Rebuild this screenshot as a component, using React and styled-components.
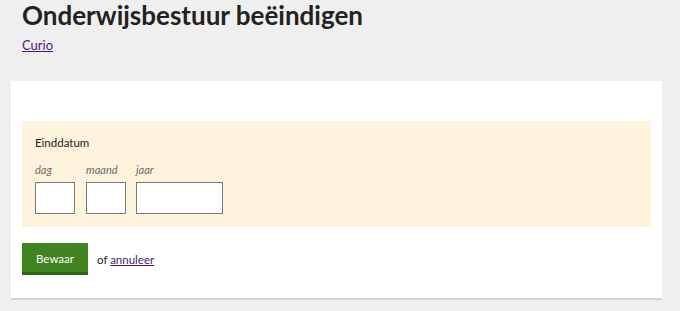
import React from 'react';
import styled, { createGlobalStyle } from 'styled-components';

const GlobalStyle = createGlobalStyle`
  html, body {
    margin: 0;
    padding: 0;
    background: #efefef;
  }
  body {
    font-family: Lato, "Open Sans", sans-serif;
    color: #222;
  }
`;

const Page = styled.div`
  width: 680px;
  height: 311px;
  overflow: hidden;
  padding: 0 18px 0 11px;
  box-sizing: border-box;
`;

const Header = styled.header`
  padding: 0 11px;
`;

const Title = styled.h1`
  margin: 0;
  padding-top: 1px;
  font-size: 26px;
  line-height: 28px;
  font-weight: 700;
  color: #222;
`;

const Crumb = styled.a`
  display: inline-block;
  margin-top: 8px;
  font-size: 13px;
  line-height: 16px;
  color: #4b1a6e;
  text-decoration: underline;
`;

const Panel = styled.section`
  margin-top: 28px;
  background: #fff;
  border-bottom: 2px solid #d3d3d3;
  padding: 40px 11px 23px;
`;

const FieldBox = styled.fieldset`
  margin: 0;
  border: 0;
  background: #fef3dd;
  padding: 14px 13px 13px;
`;

const Legend = styled.div`
  font-size: 11.5px;
  line-height: 16px;
  color: #222;
`;

const DateRow = styled.div`
  display: flex;
  gap: 11px;
  margin-top: 12px;
`;

const DatePart = styled.label`
  display: flex;
  flex-direction: column;
  margin-right: ${(p) => (p.$tight ? -1 : 0)}px;
`;

const PartLabel = styled.span`
  font-size: 11px;
  font-style: italic;
  line-height: 14px;
  color: #6b6b6b;
  margin-bottom: 5px;
`;

const DateInput = styled.input`
  width: ${(p) => p.$w}px;
  height: 32px;
  box-sizing: border-box;
  border: 1px solid #7a7a7a;
  background: #fff;
  padding: 0;
`;

const Actions = styled.div`
  display: flex;
  align-items: center;
  gap: 9px;
  margin-top: 16px;
`;

const SaveButton = styled.button`
  width: 66px;
  height: 32px;
  border: 0;
  border-bottom: 3px solid #2f6317;
  background: #3f8421;
  color: #fff;
  font-family: inherit;
  font-size: 11.5px;
  padding: 2px 0 0;
  cursor: pointer;
`;

const Cancel = styled.span`
  font-size: 11.5px;
  color: #222;

  a {
    color: #4b1a6e;
    text-decoration: underline;
  }
`;

export default function App() {
  return (
    <>
      <GlobalStyle />
      <Page>
        <Header>
          <Title>Onderwijsbestuur beëindigen</Title>
          <Crumb href="#">Curio</Crumb>
        </Header>
        <Panel>
          <FieldBox>
            <Legend>Einddatum</Legend>
            <DateRow>
              <DatePart>
                <PartLabel>dag</PartLabel>
                <DateInput $w={40} />
              </DatePart>
              <DatePart $tight>
                <PartLabel>maand</PartLabel>
                <DateInput $w={40} />
              </DatePart>
              <DatePart>
                <PartLabel>jaar</PartLabel>
                <DateInput $w={87} />
              </DatePart>
            </DateRow>
          </FieldBox>
          <Actions>
            <SaveButton>Bewaar</SaveButton>
            <Cancel>
              of <a href="#">annuleer</a>
            </Cancel>
          </Actions>
        </Panel>
      </Page>
    </>
  );
}
